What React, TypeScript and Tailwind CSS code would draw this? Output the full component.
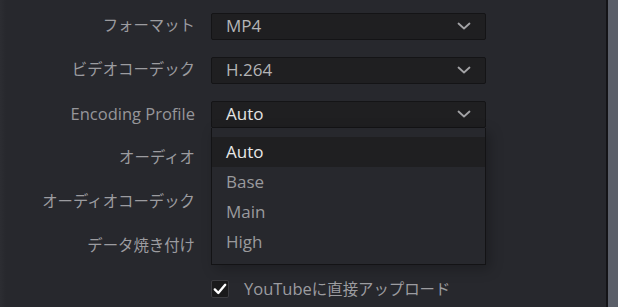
import React from "react";

const font = { fontFamily: '"Open Sans", "Noto Sans CJK JP", sans-serif' };

function Chevron() {
  return (
    <svg width="14" height="8" viewBox="0 0 14 8" className="shrink-0">
      <path d="M1.5 1.5 L7 6.5 L12.5 1.5" fill="none" stroke="#a3a3a6" strokeWidth="1.8" strokeLinecap="round" strokeLinejoin="round" />
    </svg>
  );
}

function Select({ value, active }: { value: string; active?: boolean }) {
  return (
    <div className="flex h-[27px] w-[275px] items-center justify-between rounded-[2px] border border-[#141416] bg-[#1f1f21] pl-[14px] pr-[14px]">
      <span className={active ? "text-[17px] text-[#e4e4e4]" : "text-[17px] text-[#b4b4b6]"}>{value}</span>
      <Chevron />
    </div>
  );
}

function Row({ label, latin, children }: { label: string; latin?: boolean; children?: React.ReactNode }) {
  return (
    <div className="flex h-[44px] items-center">
      <div className={latin ? "w-[196px] pr-[1px] text-right text-[16.5px] text-[#96969a]" : "w-[196px] pr-[1px] text-right text-[15.4px] text-[#9c9ca0]"}>{label}</div>
      <div className="ml-[15px] flex items-center">{children}</div>
    </div>
  );
}

export default function App() {
  const items = ["Auto", "Base", "Main", "High"];
  return (
    <div className="flex h-[307px] w-[618px] overflow-hidden bg-[#27282d]" style={font}>
      <div className="w-[6px] bg-gradient-to-r from-[#2c2d32] to-[#27282d]" />
      <div className="relative flex-1 pt-[4px] -ml-[6px]">
        <Row label="フォーマット">
          <Select value="MP4" />
        </Row>
        <Row label="ビデオコーデック">
          <Select value="H.264" />
        </Row>
        <Row label="Encoding Profile" latin>
          <div className="relative">
            <Select value="Auto" active />
            <div className="absolute left-0 top-[27px] z-10 w-[275px] border border-[#131315] border-t-0 bg-[#27282d] pb-[7px] pt-[9px] shadow-[4px_4px_12px_rgba(0,0,0,0.25)]">
              {items.map((it, i) => (
                <div
                  key={it}
                  className={
                    i === 0
                      ? "flex h-[30px] items-center bg-[#1f1f21] pl-[14px] text-[17px] text-[#e8e8e8]"
                      : "flex h-[30px] items-center pl-[14px] text-[17px] text-[#9a9a9d]"
                  }
                >
                  {it}
                </div>
              ))}
            </div>
          </div>
        </Row>
        <Row label="オーディオ" />
        <Row label="オーディオコーデック" />
        <Row label="データ焼き付け" />
        <div className="flex h-[42px] items-center pl-[211px]">
          <div className="flex h-[18px] w-[18px] items-center justify-center rounded-[2px] border border-[#3c3c40] bg-[#1a1a1b]">
            <svg width="14" height="12" viewBox="0 0 14 12">
              <path d="M1.8 6.4 L5.3 10 L12.2 1.8" fill="none" stroke="#ffffff" strokeWidth="2.4" strokeLinecap="round" strokeLinejoin="round" />
            </svg>
          </div>
          <span className="ml-[15px] text-[15.4px] text-[#9c9ca0]">
            <span className="text-[16.5px]">YouTube</span>に直接アップロード
          </span>
        </div>
      </div>
      <div className="w-[2px] bg-[#141417]" />
      <div className="w-[10px] bg-[#5b5f69]" />
    </div>
  );
}
